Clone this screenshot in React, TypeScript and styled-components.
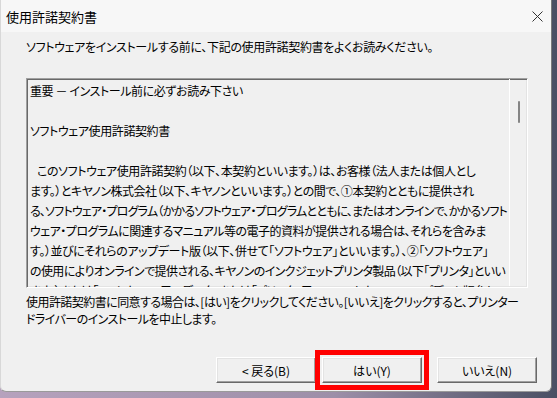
import styled, { createGlobalStyle } from "styled-components";

const GlobalStyle = createGlobalStyle`
  html, body {
    margin: 0;
    padding: 0;
    background: linear-gradient(90deg, #b6a2bd 0%, #9d8fa8 60%, #4a4f63 100%);
    width: 557px;
    height: 398px;
    overflow: hidden;
  }
  body {
    font-family: "Noto Sans CJK JP", "Noto Sans", sans-serif;
    color: #000;
  }
`;

const Window = styled.div`
  width: 552px;
  height: 392px;
  background: #f0f0f0;
  border-right: 1px solid #7a7a7a;
  border-bottom: 1px solid #9a9a9a;
  border-left: 1px solid #d8d8d8;
  border-radius: 0 0 6px 6px;
  box-sizing: border-box;
  display: flex;
  flex-direction: column;
  overflow: hidden;
`;

const TitleBar = styled.div`
  height: 32px;
  flex: none;
  display: flex;
  align-items: center;
  justify-content: space-between;
  padding: 1px 8px 0 5px;
  box-sizing: border-box;
  background: #f7f7f7;
`;

const Title = styled.span`
  font-size: 13px;
  font-feature-settings: "palt";
`;

const Body = styled.div`
  display: flex;
  flex-direction: column;
  padding-left: 25px;
`;

const Intro = styled.p`
  margin: 7px 0 0;
  font-size: 12px;
  line-height: 15px;
  letter-spacing: -0.33px;
  font-feature-settings: "palt";
  white-space: nowrap;
`;

const LicenseBox = styled.div`
  margin-top: 24px;
  width: 502px;
  height: 210px;
  box-sizing: border-box;
  border-top: 1px solid #a0a0a0;
  border-left: 1px solid #a0a0a0;
  border-right: 1px solid #ffffff;
  border-bottom: 1px solid #ffffff;
  box-shadow: inset 1px 1px 0 #696969, inset -1px -1px 0 #e3e3e3;
  display: grid;
  grid-template-columns: 1fr 18px;
  overflow: hidden;
`;

const LicenseText = styled.div`
  padding: 2px 0 0 3px;
  overflow: hidden;
  font-size: 12px;
  line-height: 20px;
  font-feature-settings: "palt";
`;

const Line = styled.div<{ $indent?: boolean; $spacing?: number }>`
  height: 20px;
  white-space: nowrap;
  letter-spacing: ${(p) => p.$spacing ?? -0.4}px;
  padding-left: ${(p) => (p.$indent ? "7px" : "0")};
`;

const ScrollTrack = styled.div`
  border-left: 1px solid #ffffff;
  margin-bottom: 1px;
  display: flex;
  justify-content: center;
  padding-top: 22px;
`;

const Thumb = styled.div`
  width: 2px;
  height: 22px;
  background: #858585;
  border-radius: 1px;
`;

const Notice = styled.p`
  margin: 5px 0 0;
  font-size: 12px;
  line-height: 17px;
  letter-spacing: -0.55px;
  font-feature-settings: "palt";
  white-space: nowrap;
`;

const ButtonRow = styled.div`
  margin-top: 30px;
  display: flex;
  justify-content: flex-end;
  padding-right: 14px;
`;

const Button = styled.button<{ $highlight?: boolean; $gap?: number }>`
  width: 100px;
  height: 26px;
  margin-left: ${(p) => p.$gap ?? 0}px;
  padding: 0;
  background: #f0f0f0;
  font-family: inherit;
  font-size: 12px;
  font-feature-settings: "palt";
  color: #000;
  border-top: 1px solid #ffffff;
  border-left: 1px solid #ffffff;
  border-right: 1px solid #696969;
  border-bottom: 1px solid #696969;
  box-shadow: inset -1px -1px 0 #a0a0a0, inset 1px 1px 0 #e3e3e3;
  outline: ${(p) => (p.$highlight ? "5px solid #ff0000" : "none")};
  outline-offset: 2px;
`;

const lines: { t: string; indent?: boolean; spacing?: number }[] = [
  { t: "重要 － インストール前に必ずお読み下さい" },
  { t: "" },
  { t: "ソフトウェア使用許諾契約書" },
  { t: "" },
  {
    t: "このソフトウェア使用許諾契約（以下、本契約といいます。）は、お客様（法人または個人とし",
    indent: true,
  },
  { t: "ます。）とキヤノン株式会社（以下、キヤノンといいます。）との間で、①本契約とともに提供され", spacing: -0.5 },
  {
    t: "る、ソフトウェア・プログラム（かかるソフトウェア・プログラムとともに、またはオンラインで、かかるソフト",
    spacing: -0.8,
  },
  { t: "ウェア・プログラムに関連するマニュアル等の電子的資料が提供される場合は、それらを含みま", spacing: -0.5 },
  { t: "す。）並びにそれらのアップデート版（以下、併せて「ソフトウェア」といいます。）、②「ソフトウェア」" },
  {
    t: "の使用によりオンラインで提供される、キヤノンのインクジェットプリンタ製品（以下「プリンタ」といい",
    spacing: -0.6,
  },
  { t: "ます。）または「ソフトウェア」用のデータ、または「プリンタ」用のファームウェアのアップデート版（以", spacing: -0.7 },
];

export default function App() {
  return (
    <>
      <GlobalStyle />
      <Window>
        <TitleBar>
          <Title>使用許諾契約書</Title>
          <svg width="11" height="11" viewBox="0 0 11 11">
            <path d="M0.5 0.5 L10.5 10.5 M10.5 0.5 L0.5 10.5" stroke="#333" strokeWidth="1" />
          </svg>
        </TitleBar>
        <Body>
          <Intro>
            ソフトウェアをインストールする前に、下記の使用許諾契約書をよくお読みください。
          </Intro>
          <LicenseBox>
            <LicenseText>
              {lines.map((l, i) => (
                <Line key={i} $indent={l.indent} $spacing={l.spacing}>
                  {l.t}
                </Line>
              ))}
            </LicenseText>
            <ScrollTrack>
              <Thumb />
            </ScrollTrack>
          </LicenseBox>
          <Notice>
            使用許諾契約書に同意する場合は、[はい]をクリックしてください。[いいえ]をクリックすると、プリンター
            <br />
            ドライバーのインストールを中止します。
          </Notice>
          <ButtonRow>
            <Button>&lt; 戻る(B)</Button>
            <Button $highlight $gap={6}>
              はい(Y)
            </Button>
            <Button $gap={15}>いいえ(N)</Button>
          </ButtonRow>
        </Body>
      </Window>
    </>
  );
}
